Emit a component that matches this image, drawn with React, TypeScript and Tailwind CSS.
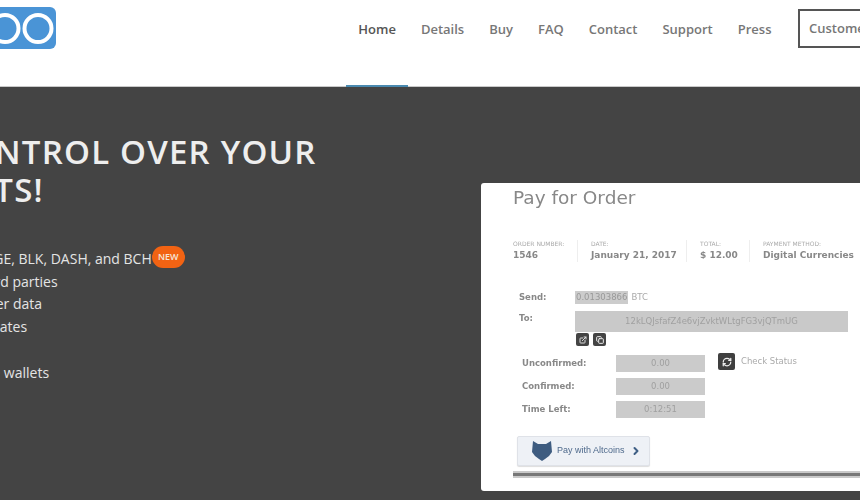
import { ChevronRight, ExternalLink, Copy, RefreshCw } from "lucide-react";

const navItems = ["Home", "Details", "Buy", "FAQ", "Contact", "Support", "Press"];

const bullets = [
  { text: "Accept BTC, LTC, DOGE, BLK, DASH, and BCH", cls: "ml-[-1px]" },
  { text: "No middlemen or third parties", cls: "ml-[-3px]" },
  { text: "You own your customer data", cls: "ml-[-8px]" },
  { text: "Get low exchange rates", cls: "ml-[13px]" },
  { text: "Fast", cls: "" },
  { text: "Works with mobile wallets", cls: "ml-[17px]" },
];

const meta = [
  { label: "ORDER NUMBER:", value: "1546", w: "w-[65px]" },
  { label: "DATE:", value: "January 21, 2017", w: "w-[96px]" },
  { label: "TOTAL:", value: "$ 12.00", w: "w-[50px]" },
  { label: "PAYMENT METHOD:", value: "Digital Currencies", w: "w-[110px]" },
];

const stats = [
  { label: "Unconfirmed:", value: "0.00" },
  { label: "Confirmed:", value: "0.00" },
  { label: "Time Left:", value: "0:12:51" },
];

function Logo() {
  return (
    <svg width="56" height="42" viewBox="0 0 56 42">
      <rect x="-40" y="0" width="96" height="42" rx="6" fill="#4a94d6" />
      <circle cx="5" cy="21.5" r="13.5" fill="none" stroke="#fff" strokeWidth="4" />
      <circle cx="38" cy="21.5" r="13.5" fill="none" stroke="#fff" strokeWidth="4" />
    </svg>
  );
}

function Fox() {
  return (
    <svg width="20" height="20" viewBox="0 0 20 20" className="shrink-0">
      <path d="M1 0 L6 3 H14 L19 0 L20 11 L17 15 L13 18 L10 20 L7 18 L3 15 L0 11 Z" fill="#3e5c80" />
    </svg>
  );
}

export default function App() {
  return (
    <div className="h-[500px] w-[860px] overflow-hidden bg-white font-['Open_Sans',sans-serif]">
      <header className="flex h-[87px] items-start justify-between border-b border-[#c9c9c9]">
        <div className="mt-[7px]">
          <Logo />
        </div>
        <nav className="flex shrink-0 items-start">
          {navItems.map((item, i) => (
            <a
              key={item}
              className={`block h-[87px] border-b-[2px] px-[12.500px] text-[13px] font-semibold ${
                i === 0 ? "border-[#4a8ab0] text-[#555]" : "border-transparent text-[#777]"
              }`}
            >
              <span className="mt-[19px] block leading-[20px]">{item}</span>
            </a>
          ))}
          <div className="mt-[9px] mr-[-48px] ml-[14px] flex h-[39px] w-[110px] items-center border-2 border-[#555] pl-[9px] text-[13px] font-semibold text-[#777]">
            Customer
          </div>
        </nav>
      </header>

      <section className="flex h-[413px] items-start justify-between bg-[#444444]">
        <div className="ml-[-138px] w-[490px] shrink-0 pt-[46px] text-white">
          <h1 className="ml-[-11px] text-[33px] leading-[38px] font-semibold tracking-[1.2px] whitespace-nowrap text-[#eeeeee]">
            TAKE CONTROL OVER YOUR
            <br />
            <span className="ml-[62px]">ASSETS!</span>
          </h1>
          <ul className="mt-[39px] text-[14px] leading-[22.7px] text-[#e4e4e4]">
            {bullets.map((b, i) => (
              <li key={b.text} className={`flex items-center whitespace-nowrap ${b.cls}`}>
                {b.text}
                {i === 0 && (
                  <span className="flex h-[22px] w-[33px] -translate-y-[2px] items-center justify-center rounded-full bg-[#f26313] text-[9px] font-semibold text-[#f5e6d8]">
                    NEW
                  </span>
                )}
              </li>
            ))}
          </ul>
        </div>

        <div className="mt-[96px] mr-[-40px] h-[308px] w-[419px] shrink-0 rounded-[3px] bg-white pl-[32px] font-['DejaVu_Sans',sans-serif] blur-[0.35px]">
          <h2 className="mt-[4px] text-[18.500px] leading-[22px] text-[#888]">Pay for Order</h2>

          <div className="mt-[31px] flex h-[22px]">
            {meta.map((m, i) => (
              <div key={m.label} className={`${m.w} shrink-0 ${i > 0 ? "ml-[13px]" : ""} ${i < 3 ? "border-r border-[#eee]" : ""}`}>
                <div className="text-[6px] leading-[8px] whitespace-nowrap text-[#aaa]">{m.label}</div>
                <div className="mt-[1px] text-[9px] leading-[12px] font-bold whitespace-nowrap text-[#888]">{m.value}</div>
              </div>
            ))}
          </div>

          <div className="mt-[29px] ml-[6px] flex h-[13px] items-center text-[8.500px] text-[#888]">
            <span className="w-[56px] font-bold">Send:</span>
            <span className="bg-[#cccccc] px-[1px] leading-[13px] text-[#999]">0.01303866</span>
            <span className="ml-[3px] text-[#aaa]">BTC</span>
          </div>
          <div className="mt-[7px] ml-[6px] flex text-[8.500px] text-[#888]">
            <span className="w-[56px] pt-[1px] font-bold">To:</span>
            <div>
              <div className="flex h-[21px] w-[273px] items-center justify-center bg-[#c9c9c9] text-[#a0a0a0]">
                12kLQJsfafZ4e6vjZvktWLtgFG3vjQTmUG
              </div>
              <div className="mt-[1px] flex gap-[4px] pl-[1px]">
                <span className="flex h-[13px] w-[13px] items-center justify-center rounded-[2px] bg-[#444]">
                  <ExternalLink size={8} color="#ddd" strokeWidth={3} />
                </span>
                <span className="flex h-[13px] w-[13px] items-center justify-center rounded-[2px] bg-[#444]">
                  <Copy size={8} color="#eee" strokeWidth={3} />
                </span>
              </div>
            </div>
          </div>

          <div className="mt-[9px] ml-[9px] flex items-start">
            <div className="flex w-[183px] flex-col gap-[6px]">
              {stats.map((s) => (
                <div key={s.label} className="flex h-[17px] items-center text-[8.500px]">
                  <span className="w-[94px] font-bold text-[#888]">{s.label}</span>
                  <span className="flex h-[17px] w-[89px] items-center justify-center bg-[#cbcbcb] text-[#a0a0a0]">{s.value}</span>
                </div>
              ))}
            </div>
            <span className="mt-[-2px] ml-[13px] flex h-[17px] w-[17px] items-center justify-center rounded-[2px] bg-[#3f3f3f]">
              <RefreshCw size={10} color="#eee" strokeWidth={3} />
            </span>
            <span className="ml-[6px] text-[8.500px] leading-[12px] text-[#aaa]">Check Status</span>
          </div>

          <div className="mt-[18px] ml-[4px] flex h-[30px] w-[133px] items-center rounded-[2px] border border-[#dfe2e8] bg-[#eef1f6] pl-[14px] font-['Liberation_Sans',sans-serif] text-[9px] text-[#4f6a8c] shadow-[0_1px_1px_#ddd]">
            <Fox />
            <span className="ml-[5px] whitespace-nowrap">Pay with Altcoins</span>
            <ChevronRight size={12} strokeWidth={4} className="ml-[5px] text-[#3f5f85]" />
          </div>

          <div className="mt-[5px] h-[7px] bg-[#c9c9c9] py-[2px]">
            <div className="h-[3px] bg-[#777]" />
          </div>
        </div>
      </section>
    </div>
  );
}
